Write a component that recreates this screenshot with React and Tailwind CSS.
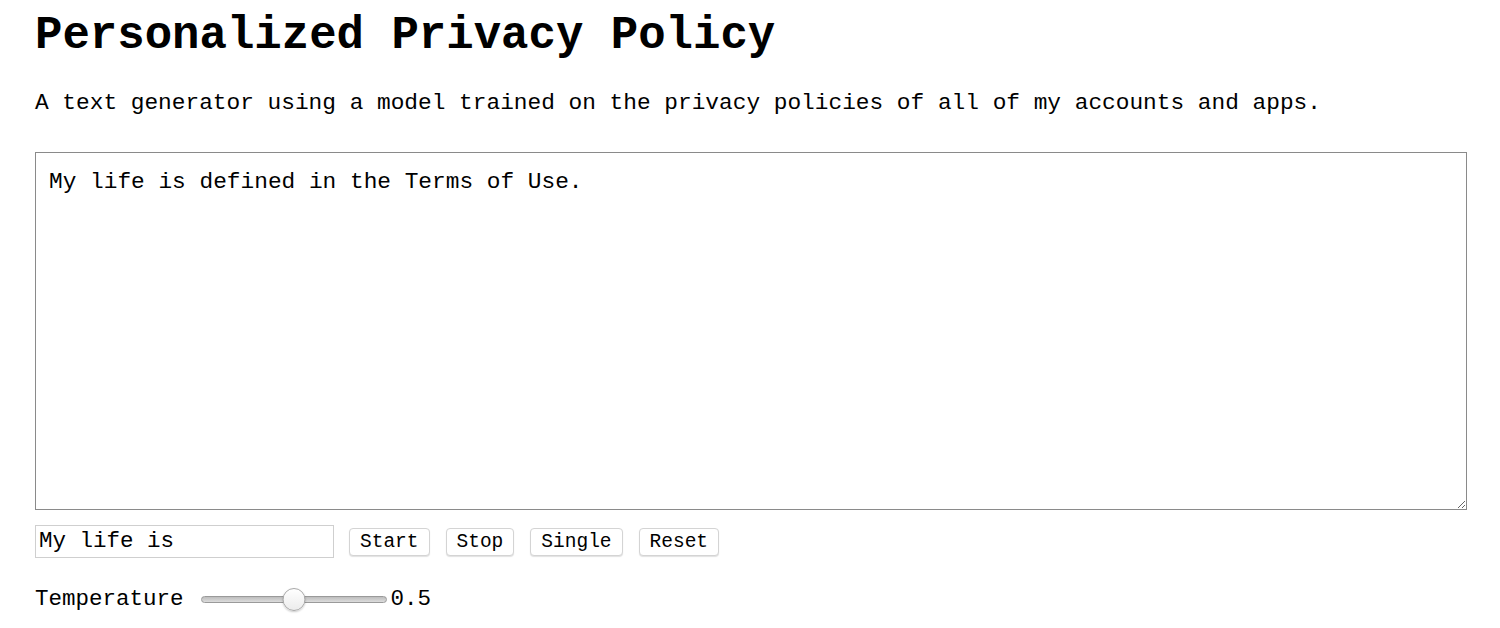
import React, { useState } from 'react';

const mono = { fontFamily: '"Liberation Mono", "Courier New", monospace' };

const Button = ({ children, className }) => (
    <button
        className={`h-[28px] rounded-[4px] border border-[#d4d4d4] bg-white px-[10px] pt-[2px] text-[19.5px] leading-none text-black shadow-[0_1px_1px_rgba(0,0,0,0.12)] ${className || ''}`}
        style={mono}
    >
        {children}
    </button>
);

const Slider = ({ value }) => (
    <div className="relative h-[24px] w-[186px]">
        <div className="absolute left-0 right-0 top-[8px] h-[7px] rounded-full border border-[#9a9a9a] bg-gradient-to-b from-[#bdbdbd] to-[#dcdcdc]" />
        <div
            className="absolute top-0 h-[23px] w-[23px] -translate-x-1/2 rounded-full border border-[#a8a8a8] bg-gradient-to-b from-white to-[#ececec] shadow-[0_1px_2px_rgba(0,0,0,0.2)]"
            style={{ left: `${value * 100}%` }}
        />
    </div>
);

const App = () => {
    const [output, setOutput] = useState('My life is defined in the Terms of Use.');
    const [seed, setSeed] = useState('My life is');

    return (
        <div className="min-h-screen bg-white px-[35px] text-black" style={mono}>
            <h1 className="pt-[13px] text-[45.7px] font-bold leading-[46px]">Personalized Privacy Policy</h1>
            <p className="mt-[31px] text-[22.8px] leading-[26px]">
                A text generator using a model trained on the privacy policies of all of my accounts and apps.
            </p>
            <textarea
                value={output}
                onChange={(e) => setOutput(e.target.value)}
                className="mt-[36px] block h-[358px] w-[1432px] border border-[#8a8a8a] px-[13px] pt-[16px] pb-[12px] text-[22.8px] leading-[26px] outline-none"
                style={mono}
            />
            <div className="mt-[15px] flex items-center">
                <input
                    value={seed}
                    onChange={(e) => setSeed(e.target.value)}
                    className="h-[33px] w-[299px] border border-[#cfcfcf] px-[3px] text-[22.5px] outline-none"
                    style={mono}
                />
                <div className="ml-[15px] flex gap-[16px]">
                    <Button>Start</Button>
                    <Button>Stop</Button>
                    <Button>Single</Button>
                    <Button>Reset</Button>
                </div>
            </div>
            <div className="mt-[25px] flex items-center">
                <span className="text-[22.5px]">Temperature</span>
                <div className="ml-[17px]">
                    <Slider value={0.5} />
                </div>
                <span className="ml-[4px] text-[22.5px]">0.5</span>
            </div>
        </div>
    );
};

export default App;
